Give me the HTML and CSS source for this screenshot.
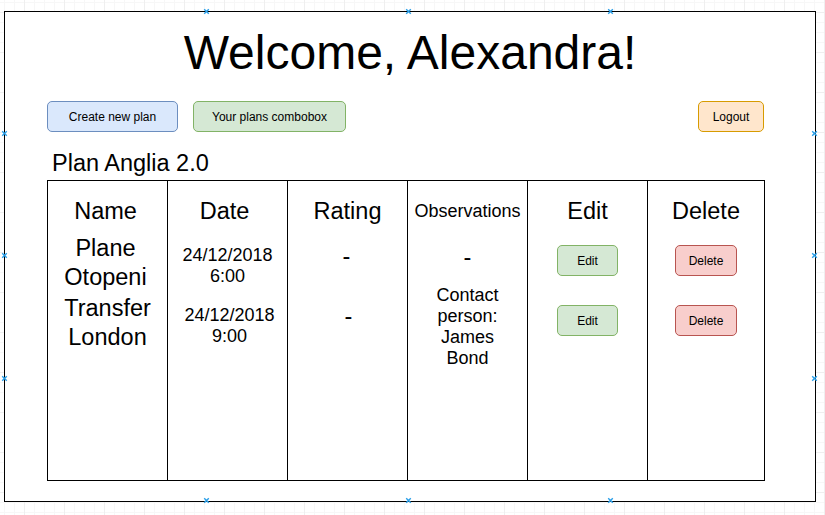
FILE: index.html
```html
<!DOCTYPE html>
<html>
<head>
<meta charset="utf-8">
<link rel="stylesheet" href="styles.css">
</head>
<body>
<div class="frame">
  <h1 class="title">Welcome, Alexandra!</h1>
  <div class="toolbar">
    <button class="btn btn-blue btn-create">Create new plan</button>
    <button class="btn btn-green btn-combo">Your plans combobox</button>
    <button class="btn btn-orange btn-logout">Logout</button>
  </div>
  <h2 class="plan-title">Plan Anglia 2.0</h2>
  <div class="table">
    <div class="col col-first">
      <div class="head head-name">Name</div>
      <div class="name-block nb1">Plane<br>Otopeni</div>
      <div class="name-block nb2">Transfer<br>London</div>
    </div>
    <div class="col">
      <div class="head head-date">Date</div>
      <div class="date-block db1">24/12/2018<br>6:00</div>
      <div class="date-block db2">24/12/2018<br>9:00</div>
    </div>
    <div class="col">
      <div class="head">Rating</div>
      <div class="dash r1">-</div>
      <div class="dash r2">-</div>
    </div>
    <div class="col">
      <div class="head-small">Observations</div>
      <div class="dash o1">-</div>
      <div class="obs-text">Contact<br>person:<br>James<br>Bond</div>
    </div>
    <div class="col">
      <div class="head">Edit</div>
      <button class="btn btn-green btn-small b1">Edit</button>
      <button class="btn btn-green btn-small b2">Edit</button>
    </div>
    <div class="col">
      <div class="head">Delete</div>
      <button class="btn btn-red btn-small btn-del b1">Delete</button>
      <button class="btn btn-red btn-small btn-del b2">Delete</button>
    </div>
  </div>

  <svg class="mk mk-top p-x1" viewBox="0 0 7 7"><path d="M1.2 1.2L5.8 5.8M5.8 1.2L1.2 5.8"/></svg>
  <svg class="mk mk-top p-x2" viewBox="0 0 7 7"><path d="M1.2 1.2L5.8 5.8M5.8 1.2L1.2 5.8"/></svg>
  <svg class="mk mk-top p-x3" viewBox="0 0 7 7"><path d="M1.2 1.2L5.8 5.8M5.8 1.2L1.2 5.8"/></svg>
  <svg class="mk mk-bottom p-x1" viewBox="0 0 7 7"><path d="M1.2 1.2L5.8 5.8M5.8 1.2L1.2 5.8"/></svg>
  <svg class="mk mk-bottom p-x2" viewBox="0 0 7 7"><path d="M1.2 1.2L5.8 5.8M5.8 1.2L1.2 5.8"/></svg>
  <svg class="mk mk-bottom p-x3" viewBox="0 0 7 7"><path d="M1.2 1.2L5.8 5.8M5.8 1.2L1.2 5.8"/></svg>
  <svg class="mk mk-left p-y1" viewBox="0 0 7 7"><path d="M1.2 1.2L5.8 5.8M5.8 1.2L1.2 5.8"/></svg>
  <svg class="mk mk-left p-y2" viewBox="0 0 7 7"><path d="M1.2 1.2L5.8 5.8M5.8 1.2L1.2 5.8"/></svg>
  <svg class="mk mk-left p-y3" viewBox="0 0 7 7"><path d="M1.2 1.2L5.8 5.8M5.8 1.2L1.2 5.8"/></svg>
  <svg class="mk mk-right p-y1" viewBox="0 0 7 7"><path d="M1.2 1.2L5.8 5.8M5.8 1.2L1.2 5.8"/></svg>
  <svg class="mk mk-right p-y2" viewBox="0 0 7 7"><path d="M1.2 1.2L5.8 5.8M5.8 1.2L1.2 5.8"/></svg>
  <svg class="mk mk-right p-y3" viewBox="0 0 7 7"><path d="M1.2 1.2L5.8 5.8M5.8 1.2L1.2 5.8"/></svg>
</div>
</body>
</html>
```
FILE: styles.css
```css
html, body {
  margin: 0;
  padding: 0;
}
body {
  width: 825px;
  height: 515px;
  overflow: hidden;
  font-family: "Liberation Sans", Arial, sans-serif;
  color: #000;
  background-color: #fff;
  background-image:
    linear-gradient(to right, #efefef 1px, transparent 1px),
    linear-gradient(to bottom, #efefef 1px, transparent 1px),
    linear-gradient(to right, #f7f7f7 1px, transparent 1px),
    linear-gradient(to bottom, #f7f7f7 1px, transparent 1px);
  background-size: 40px 40px, 40px 40px, 10px 10px, 10px 10px;
  background-position: 24px 0, 0 12px, 4px 0, 0 2px;
}
.frame {
  position: relative;
  box-sizing: border-box;
  margin: 11px 0 0 4px;
  width: 812px;
  height: 491px;
  border: 1px solid #000;
  background: #fff;
}
.title {
  margin: 0;
  padding-top: 13px;
  font-size: 48px;
  font-weight: normal;
  line-height: 56px;
  text-align: center;
}
.toolbar {
  display: flex;
  gap: 15px;
  margin-top: 20px;
  padding: 0 51px 0 42px;
}
.btn {
  box-sizing: border-box;
  height: 31px;
  padding: 1px 0 0;
  border-radius: 5px;
  border: 1px solid;
  font-family: "Liberation Sans", Arial, sans-serif;
  font-size: 12px;
  color: #000;
  line-height: 28px;
  text-align: center;
}
.btn-blue { background: #dae8fc; border-color: #6c8ebf; }
.btn-green { background: #d5e8d4; border-color: #82b366; }
.btn-orange { background: #ffe6cc; border-color: #d79b00; }
.btn-red { background: #f8cecc; border-color: #b85450; }
.btn-create { width: 131px; }
.btn-combo { width: 153px; }
.btn-logout { width: 66px; margin-left: auto; }
.plan-title {
  margin: 17px 0 0;
  padding-left: 47px;
  font-size: 23.5px;
  font-weight: normal;
  line-height: 28px;
}
.table {
  box-sizing: border-box;
  display: grid;
  grid-template-columns: 119px 120px 120px 120px 120px 117px;
  width: 718px;
  height: 301px;
  margin: 3px 0 0 42px;
  border: 1px solid #000;
}
.col {
  display: flex;
  flex-direction: column;
  align-items: center;
  border-left: 1px solid #000;
  padding-top: 16px;
  text-align: center;
}
.col-first { border-left: none; }
.head {
  font-size: 23.5px;
  line-height: 28px;
}
.head-name { margin-right: 4px; }
.head-date { margin-right: 6px; }
.head-small {
  margin-top: 4px;
  font-size: 18px;
  line-height: 21px;
}
.name-block {
  font-size: 23.5px;
  line-height: 28.5px;
}
.nb1 { margin-top: 9px; margin-right: 4px; }
.nb2 { margin-top: 3px; }
.date-block {
  font-size: 18px;
  line-height: 21px;
}
.db1 { margin-top: 20px; }
.db2 { margin-top: 18px; margin-left: 4px; }
.dash {
  font-size: 23.5px;
  line-height: 28px;
}
.r1 { margin-top: 17px; margin-right: 2px; }
.r2 { margin-top: 32px; margin-left: 2px; }
.o1 { margin-top: 21px; }
.obs-text {
  margin-top: 14px;
  font-size: 18px;
  line-height: 21px;
}
.btn-small { width: 61px; }
.btn-del { width: 62px; }
.b1 { margin-top: 20px; }
.b2 { margin-top: 29px; }
.mk {
  position: absolute;
  width: 7px;
  height: 7px;
  fill: none;
  stroke: #2a9fe8;
  stroke-width: 1.4;
}
.mk-top { top: -4px; }
.mk-bottom { top: 485px; }
.mk-left { left: -4px; }
.mk-right { left: 806px; }
.p-x1 { left: 198px; }
.p-x2 { left: 400px; }
.p-x3 { left: 602px; }
.p-y1 { top: 118px; }
.p-y2 { top: 240px; }
.p-y3 { top: 363px; }
```
